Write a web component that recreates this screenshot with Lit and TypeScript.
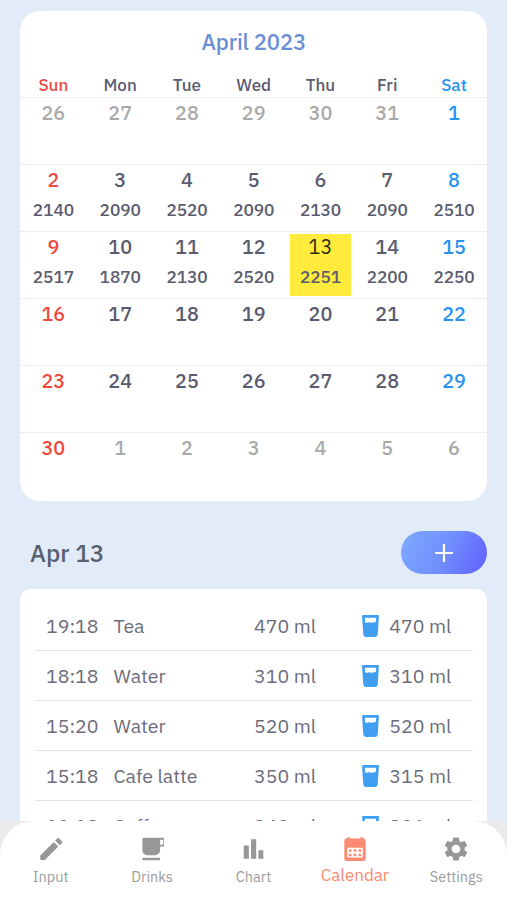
import { LitElement, html, css, svg, nothing } from "lit";
import { customElement } from "lit/decorators.js";
import { classMap } from "lit/directives/class-map.js";

type Day = { n: number; total?: number; out?: boolean; selected?: boolean };

const WEEKDAYS = ["Sun", "Mon", "Tue", "Wed", "Thu", "Fri", "Sat"];
const TOTALS: Record<number, number> = {
  2: 2140, 3: 2090, 4: 2520, 5: 2090, 6: 2130, 7: 2090, 8: 2510,
  9: 2517, 10: 1870, 11: 2130, 12: 2520, 13: 2251, 14: 2200, 15: 2250,
};
const DAYS: Day[] = [
  ...[26, 27, 28, 29, 30, 31].map((n) => ({ n, out: true })),
  ...Array.from({ length: 30 }, (_, i) => ({ n: i + 1, total: TOTALS[i + 1], selected: i + 1 === 13 })),
  ...[1, 2, 3, 4, 5, 6].map((n) => ({ n, out: true })),
];
const WEEKS = Array.from({ length: 6 }, (_, i) => DAYS.slice(i * 7, i * 7 + 7));

const ENTRIES = [
  ["19:18", "Tea", 470, 470],
  ["18:18", "Water", 310, 310],
  ["15:20", "Water", 520, 520],
  ["15:18", "Cafe latte", 350, 315],
  ["12:18", "Coffee", 340, 306],
] as const;

const FONT = css`"IBM Plex Sans", "Noto Sans CJK JP", "Noto Sans", sans-serif`;

@customElement("month-card")
class MonthCard extends LitElement {
  static styles = css`
    :host { display: block; height: 490px; background: #fff; border-radius: 20px; overflow: hidden; color: #5a5b6e; }
    .title { padding-top: 1px; line-height: 60px; text-align: center; font-size: 22px; font-weight: 500; letter-spacing: -0.15px; color: #6b8fd6; }
    .row { display: grid; grid-template-columns: repeat(7, 1fr); }
    .names { line-height: 26px; margin-bottom: -1px; font-size: 17px; font-weight: 500; text-align: center; }
    .week { box-sizing: border-box; height: 67.2px; border-top: 1.4px solid #efeff1; }
    .day { margin: 2px 2.6px; text-align: center; font-weight: 500; }
    .num { line-height: 26px; font-size: 19.8px; }
    .total { line-height: 33px; padding-bottom: 3px; font-size: 17.3px; letter-spacing: -0.1px; }
    .sun { color: #ee4a3e; }
    .sat { color: #2793ee; }
    .out { color: #a9a9a9; }
    .selected { background: #ffeb3b; }
    .selected .num { color: #2b2a10; font-weight: 400; }
  `;
  render() {
    return html`
      <div class="title">April 2023</div>
      <div class="row names">
        ${WEEKDAYS.map((d, i) => html`<div class=${classMap({ sun: i === 0, sat: i === 6 })}>${d}</div>`)}
      </div>
      ${WEEKS.map((week) => html`<div class="row week">
        ${week.map((d, i) => html`<div class=${classMap({ day: true, selected: !!d.selected })}>
          <div class=${classMap({ num: true, out: !!d.out, sun: !d.out && i === 0, sat: !d.out && i === 6 })}>${d.n}</div>
          ${d.total ? html`<div class="total">${d.total}</div>` : nothing}
        </div>`)}
      </div>`)}
    `;
  }
}

@customElement("drink-log")
class DrinkLog extends LitElement {
  static styles = css`
    :host { display: block; background: #fff; border-radius: 11px 11px 0 0; padding: 12px 14.5px 0 15px; color: #6b6c7b; }
    .entry { display: grid; grid-template-columns: 67.5px 140.5px 108px 27.3px 1fr; align-items: center; box-sizing: border-box;
      height: 50.15px; padding-left: 11px; border-bottom: 1.5px solid #e2e2e4; font-size: 19.5px; line-height: 49px; white-space: nowrap; }
    .cup { display: block; width: 17px; height: 22px; margin-top: 2px; }
  `;
  render() {
    return ENTRIES.map(([time, name, volume, water]) => html`<div class="entry">
      <span>${time}</span>
      <span>${name}</span>
      <span>${volume} ml</span>
      <svg class="cup" viewBox="0 0 17 22">
        <path fill="#419ff1" fill-rule="evenodd" d="M1 0h15q1 0 .9 1L15.8 19Q15.500 22 12.600 22H4.400Q1.500 22 1.200 19L.1 1Q0 0 1 0ZM2.800 2.800l.5 4.600q1.200.5 2.600 0 1.300-.5 2.600 0 1.400.5 2.700 0 1.200-.5 2.500-.1L14.200 2.800Z"/>
      </svg>
      <span>${water} ml</span>
    </div>`);
  }
}

const TABS = [
  { label: "Input", icon: svg`<path d="M3 17.250V20q0 1 1 1h2.750L17.810 9.940l-3.750-3.750L3 17.250zM20.710 7.040a1 1 0 0 0 0-1.410l-2.340-2.340a1 1 0 0 0-1.410 0l-1.830 1.830 3.750 3.750 1.830-1.830z"/>`, box: "2 2.200 19.600 19.600" },
  { label: "Drinks", icon: svg`<path d="M20 3H5q-1 0-1 1v9a4 4 0 0 0 4 4h6a4 4 0 0 0 4-4v-3h2a2 2 0 0 0 2-2V5a2 2 0 0 0-2-2zm.500 5.200q0 .4-.4.4H18V4.600h2.100q.4 0 .4.4zM4.500 19h13q.5 0 .5.5v1q0 .5-.5.5h-13q-.5 0-.5-.5v-1q0-.5.5-.5z"/>`, box: "2.100 2.500 19 19" },
  { label: "Chart", icon: svg`<path d="M4 9.200h4.200V20H4zM10 4h4.200v16H10zM16 13h4v7h-4z"/>`, box: "1.800 2.200 19.600 19.600" },
  { label: "Calendar", icon: svg`<path fill-rule="evenodd" d="M4 2h.6V1.200q0-.7 1.100-.7t1.100.7V2h10.400V1.200q0-.7 1.100-.7t1.100.7V2H20q2 0 2 2v17q0 2-2 2H4q-2 0-2-2V4q0-2 2-2ZM5.300 10.600q-.6 0-.6.6v8q0 .6.6.6h13.400q.6 0 .6-.6v-8q0-.6-.6-.6ZM6.200 12h2.500v2.300H6.200zM10.750 12h2.500v2.300h-2.500zM15.300 12h2.500v2.300h-2.500zM6.200 16.200h2.500v2.300H6.200zM10.750 16.200h2.500v2.300h-2.500zM15.300 16.200h2.500v2.300h-2.500z"/>`, box: "1.200 .5 21.600 22.500" },
  { label: "Settings", icon: svg`<path d="M19.140 12.940c.04-.3.06-.61.06-.94 0-.32-.02-.64-.07-.94l2.030-1.580a.49.49 0 0 0 .12-.61l-1.920-3.320a.488.488 0 0 0-.59-.22l-2.390.96c-.5-.38-1.030-.7-1.620-.94l-.36-2.540a.484.484 0 0 0-.48-.41h-3.840c-.24 0-.43.17-.47.41l-.36 2.540c-.59.24-1.130.57-1.620.94l-2.390-.96c-.22-.08-.47 0-.59.22L2.740 8.870c-.12.21-.08.47.12.61l2.030 1.580c-.05.3-.09.63-.09.94s.02.64.07.94l-2.030 1.580a.49.49 0 0 0-.12.61l1.920 3.320c.12.22.37.29.59.22l2.390-.96c.5.38 1.030.7 1.620.94l.36 2.540c.05.24.24.41.48.41h3.840c.24 0 .44-.17.47-.41l.36-2.540c.59-.24 1.130-.56 1.620-.94l2.390.96c.22.08.47 0 .59-.22l1.920-3.320c.12-.22.07-.47-.12-.61l-2.010-1.580zM12 15.600A3.600 3.600 0 1 1 12 8.400a3.600 3.600 0 0 1 0 7.200z"/>`, box: "2 2 20 20" },
];

@customElement("tab-bar")
class TabBar extends LitElement {
  static styles = css`
    :host { display: block; background: #ebebec; }
    .bar { box-sizing: border-box; height: 79px; display: grid; grid-template-columns: repeat(5, 1fr); width: 507px;
      background: #fff; border-radius: 34px 34px 0 0; padding: 16px 0 0; }
    .tab { display: flex; flex-direction: column; align-items: center; color: #9b9b9d; font-size: 14.5px; line-height: 31px; }
    .icon { width: 24px; height: 24px; flex: none; fill: #979797; }
    .active { color: #fb8a72; font-size: 17px; line-height: 29px; }
    .active .icon { fill: #fb8a72; }
  `;
  render() {
    return html`<nav class="bar">${TABS.map((t) => html`
      <div class=${classMap({ tab: true, active: t.label === "Calendar" })}>
        <svg class="icon" viewBox=${t.box}>${t.icon}</svg>
        <span>${t.label}</span>
      </div>`)}</nav>`;
  }
}

@customElement("app-root")
class AppRoot extends LitElement {
  static styles = css`
    :host { display: flex; flex-direction: column; width: 507px; height: 900px; overflow: hidden; background: #e2ecf8;
      font-family: ${FONT}; }
    .content { flex: 1; min-height: 0; overflow: hidden; padding: 10.5px 19.6px 0 20px; }
    .heading { display: flex; justify-content: space-between; align-items: center; height: 43px; margin: 30.5px 0.9px 14.5px 10px; }
    .date { font-size: 24.2px; font-weight: 500; line-height: 43px; padding-top: 2px; color: #56606e; }
    .add { display: flex; align-items: center; justify-content: center; width: 86px; height: 43px; border: 0; padding: 0;
      border-radius: 22px; background: linear-gradient(115deg, #7ba5ff 10%, #7190ff 50%, #6466fd 92%); }
    .plus { width: 18px; height: 18px; stroke: #fff; stroke-width: 2.2; }
  `;
  render() {
    return html`
      <main class="content">
        <month-card></month-card>
        <div class="heading">
          <span class="date">Apr 13</span>
          <button class="add" aria-label="Add"><svg class="plus" viewBox="0 0 18 18"><path d="M9 0v18M0 9h18"/></svg></button>
        </div>
        <drink-log></drink-log>
      </main>
      <tab-bar></tab-bar>
    `;
  }
}
